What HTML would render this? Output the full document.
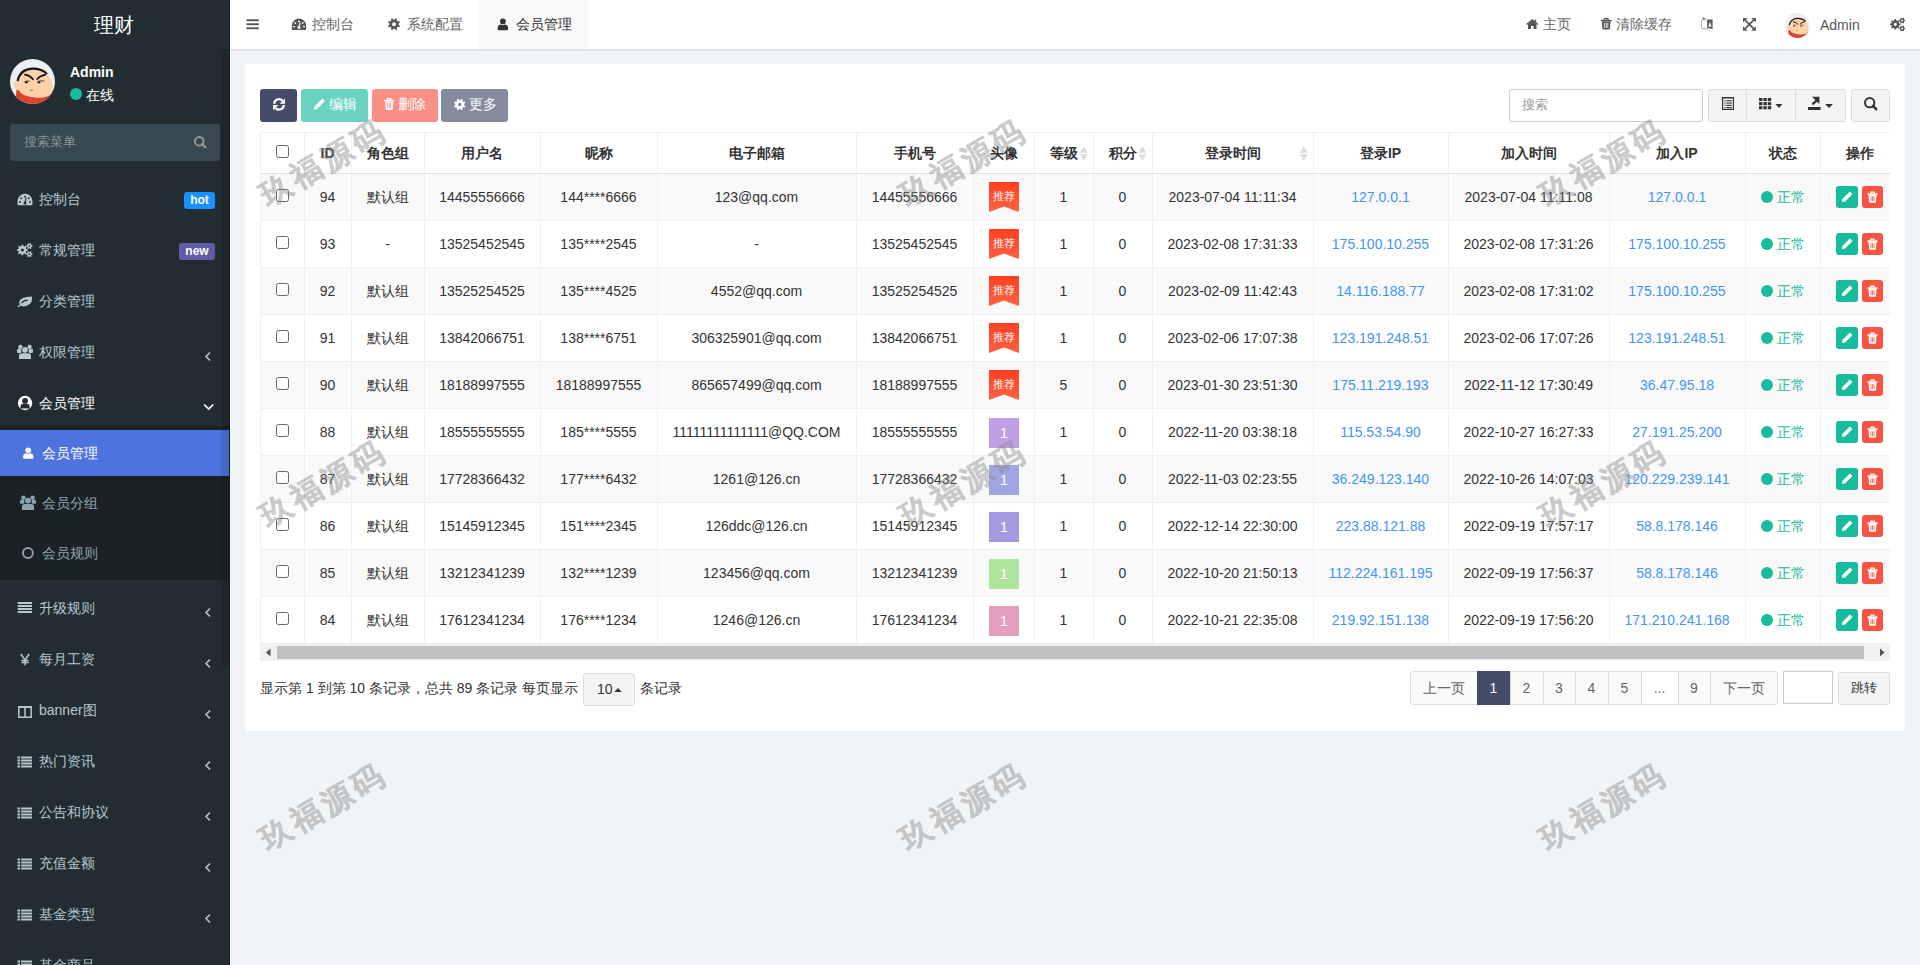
<!DOCTYPE html>
<html><head><meta charset="utf-8"><title>会员管理</title><style>
*{box-sizing:border-box;margin:0;padding:0}
html,body{width:1920px;height:965px;overflow:hidden}
body{position:relative;background:#f1f4f6;font-family:"Liberation Sans",sans-serif;font-size:14px;color:#333;line-height:20px}
.a{position:absolute}
.t{white-space:nowrap}
.badge{height:17px;line-height:17px;font-size:12px;font-weight:bold;color:#fff;border-radius:3px;text-align:center}
.wm{width:200px;height:40px;line-height:40px;text-align:center;font-size:31px;font-weight:bold;letter-spacing:4px;text-indent:4px;color:#8a8a8a;-webkit-text-stroke:0.3px #8a8a8a;opacity:.44;transform:rotate(-30deg);white-space:nowrap}
svg{display:block}
</style></head><body>
<div class="a" style="left:0px;top:0px;width:230px;height:965px;background:#222d32;"></div>
<div class="a t" style="left:94px;top:15px;color:#fff;font-size:20px;line-height:20px;">理财</div>
<div class="a" style="left:10px;top:59px;width:45px;height:45px;border-radius:50%;overflow:hidden"><svg width="45" height="45" viewBox="0 0 45 45"><rect width="45" height="45" fill="#eceef2"/><path d="M6.4 30.3 L5.5 46 L45 46 L45 35 L40 34Z" fill="#d9432f"/><path d="M3.6 25.5 Q3.4 21.6 7.6 21.8 Q10.5 11 22 9.3 Q33 9 38.5 17.2 Q43 22 42.6 30.5 Q41.6 38 33 38.4 Q24 39.4 16.8 37 Q11 35.6 9.4 31.5 Q4.4 31 3.6 25.5Z" fill="#fdd2a8"/><path d="M7.6 22 Q9.8 10.6 22 9.6 Q32 9.4 37 15" stroke="#111" stroke-width="2.2" fill="none"/><path d="M15 15.6 Q19.6 16.2 23 20.2" stroke="#111" stroke-width="1.8" fill="none" stroke-linecap="round"/><path d="M27.2 20 Q30.4 16.4 35 15.8" stroke="#111" stroke-width="1.8" fill="none" stroke-linecap="round"/><path d="M14.5 22.6 Q17 21.6 20 22.2 M27.6 22.4 Q31 21.5 34.2 22" stroke="#222" stroke-width="0.8" fill="none"/><ellipse cx="16.4" cy="23.4" rx="1.5" ry="0.9" fill="#111"/><ellipse cx="29" cy="23.4" rx="1.5" ry="0.9" fill="#111"/><path d="M20 31.5 Q21.5 30.8 23 31.4" stroke="#333" stroke-width="0.6" fill="none"/></svg></div>
<div class="a t" style="left:70px;top:62px;color:#fff;font-size:14px;line-height:20px;font-weight:bold;">Admin</div>
<div class="a t" style="left:86px;top:85px;color:#fff;font-size:14px;line-height:20px;">在线</div>
<div class="a" style="left:10px;top:124px;width:210px;height:37px;background:#374850;border-radius:3px"></div>
<div class="a t" style="left:24px;top:132px;color:#8a9499;font-size:13px;line-height:20px;">搜索菜单</div>
<div class="a t" style="left:39px;top:189px;color:#b8c7ce;font-size:14px;line-height:20px;">控制台</div>
<div class="a badge" style="left:184px;top:192px;width:31px;background:#1890ff">hot</div>
<div class="a t" style="left:39px;top:240px;color:#b8c7ce;font-size:14px;line-height:20px;">常规管理</div>
<div class="a badge" style="left:179px;top:243px;width:36px;background:#605ca8">new</div>
<div class="a t" style="left:39px;top:291px;color:#b8c7ce;font-size:14px;line-height:20px;">分类管理</div>
<div class="a t" style="left:39px;top:342px;color:#b8c7ce;font-size:14px;line-height:20px;">权限管理</div>
<div class="a t" style="left:39px;top:393px;color:#fff;font-size:14px;line-height:20px;">会员管理</div>
<div class="a" style="left:0px;top:426px;width:230px;height:154px;background:#1b2226;"></div>
<div class="a" style="left:0px;top:430px;width:230px;height:46px;background:#4e73df;"></div>
<div class="a t" style="left:42px;top:443px;color:#fff;font-size:14px;line-height:20px;">会员管理</div>
<div class="a t" style="left:42px;top:493px;color:#8aa4af;font-size:14px;line-height:20px;">会员分组</div>
<div class="a t" style="left:42px;top:543px;color:#8aa4af;font-size:14px;line-height:20px;">会员规则</div>
<div class="a t" style="left:39px;top:598px;color:#b8c7ce;font-size:14px;line-height:20px;">升级规则</div>
<div class="a t" style="left:39px;top:649px;color:#b8c7ce;font-size:14px;line-height:20px;">每月工资</div>
<div class="a t" style="left:39px;top:700px;color:#b8c7ce;font-size:14px;line-height:20px;">banner图</div>
<div class="a t" style="left:39px;top:751px;color:#b8c7ce;font-size:14px;line-height:20px;">热门资讯</div>
<div class="a t" style="left:39px;top:802px;color:#b8c7ce;font-size:14px;line-height:20px;">公告和协议</div>
<div class="a t" style="left:39px;top:853px;color:#b8c7ce;font-size:14px;line-height:20px;">充值金额</div>
<div class="a t" style="left:39px;top:904px;color:#b8c7ce;font-size:14px;line-height:20px;">基金类型</div>
<div class="a t" style="left:39px;top:955px;color:#b8c7ce;font-size:14px;line-height:20px;">基金商品</div>
<div class="a" style="left:221px;top:49px;width:8px;height:618px;background:rgba(0,0,0,0.1);border-radius:3px"></div>
<div class="a" style="left:0px;top:49px;width:221px;height:1px;background:rgba(0,0,0,0.06);"></div>
<div class="a" style="left:229px;top:0px;width:1px;height:965px;background:#1a2125;"></div>
<div class="a" style="left:230px;top:0px;width:1690px;height:49px;background:#fff;"></div>
<div class="a" style="left:230px;top:49px;width:1690px;height:1px;background:#dcdfe2;"></div>
<div class="a" style="left:230px;top:50px;width:1690px;height:2px;background:linear-gradient(rgba(0,0,0,0.05),rgba(0,0,0,0));"></div>
<div class="a t" style="left:312px;top:14px;color:#666;font-size:14px;line-height:20px;">控制台</div>
<div class="a t" style="left:407px;top:14px;color:#666;font-size:14px;line-height:20px;">系统配置</div>
<div class="a" style="left:479px;top:0px;width:109px;height:49px;background:#f8f8f8;"></div>
<div class="a t" style="left:516px;top:14px;color:#333;font-size:14px;line-height:20px;">会员管理</div>
<div class="a t" style="left:1543px;top:14px;color:#666;font-size:14px;line-height:20px;">主页</div>
<div class="a t" style="left:1616px;top:14px;color:#666;font-size:14px;line-height:20px;">清除缓存</div>
<div class="a" style="left:1785px;top:13px;width:25px;height:25px;border-radius:50%;overflow:hidden"><svg width="25" height="25" viewBox="0 0 45 45"><rect width="45" height="45" fill="#eceef2"/><path d="M6.4 30.3 L5.5 46 L45 46 L45 35 L40 34Z" fill="#d9432f"/><path d="M3.6 25.5 Q3.4 21.6 7.6 21.8 Q10.5 11 22 9.3 Q33 9 38.5 17.2 Q43 22 42.6 30.5 Q41.6 38 33 38.4 Q24 39.4 16.8 37 Q11 35.6 9.4 31.5 Q4.4 31 3.6 25.5Z" fill="#fdd2a8"/><path d="M7.6 22 Q9.8 10.6 22 9.6 Q32 9.4 37 15" stroke="#111" stroke-width="2.2" fill="none"/><path d="M15 15.6 Q19.6 16.2 23 20.2" stroke="#111" stroke-width="1.8" fill="none" stroke-linecap="round"/><path d="M27.2 20 Q30.4 16.4 35 15.8" stroke="#111" stroke-width="1.8" fill="none" stroke-linecap="round"/><path d="M14.5 22.6 Q17 21.6 20 22.2 M27.6 22.4 Q31 21.5 34.2 22" stroke="#222" stroke-width="0.8" fill="none"/><ellipse cx="16.4" cy="23.4" rx="1.5" ry="0.9" fill="#111"/><ellipse cx="29" cy="23.4" rx="1.5" ry="0.9" fill="#111"/><path d="M20 31.5 Q21.5 30.8 23 31.4" stroke="#333" stroke-width="0.6" fill="none"/></svg></div>
<div class="a t" style="left:1820px;top:15px;color:#555;font-size:14px;line-height:20px;">Admin</div>
<div class="a" style="left:245px;top:64px;width:1660px;height:667px;background:#fff;border-radius:3px"></div>
<div class="a" style="left:260px;top:89px;width:37px;height:33px;background:#444c69;border-radius:3px"></div>
<div class="a" style="left:301px;top:89px;width:67px;height:33px;background:#69d3bf;border-radius:3px"></div>
<div class="a t" style="left:329px;top:94px;color:#fff;font-size:14px;line-height:20px;">编辑</div>
<div class="a" style="left:372px;top:89px;width:66px;height:33px;background:#fa9085;border-radius:3px"></div>
<div class="a t" style="left:398px;top:94px;color:#fff;font-size:14px;line-height:20px;">删除</div>
<div class="a" style="left:441px;top:89px;width:67px;height:33px;background:#858a9d;border-radius:3px"></div>
<div class="a t" style="left:469px;top:94px;color:#fff;font-size:14px;line-height:20px;">更多</div>
<div class="a" style="left:1509px;top:89px;width:194px;height:33px;background:#fff;border:1px solid #ccc;border-radius:3px"></div>
<div class="a t" style="left:1522px;top:95px;color:#999;font-size:13px;line-height:20px;">搜索</div>
<div class="a" style="left:1708px;top:89px;width:138px;height:33px;background:#f4f4f4;border:1px solid #ddd;border-radius:3px"></div>
<div class="a" style="left:1746px;top:89px;width:1px;height:33px;background:#ddd;"></div>
<div class="a" style="left:1795px;top:89px;width:1px;height:33px;background:#ddd;"></div>
<div class="a" style="left:1851px;top:89px;width:39px;height:33px;background:#f4f4f4;border:1px solid #ddd;border-radius:3px"></div>
<div class="a" style="left:260px;top:132px;width:1630px;height:1px;background:#f0f0f0;"></div>
<div class="a" style="left:260px;top:173px;width:1630px;height:1px;background:#e2e2e2;"></div>
<div class="a" style="left:260px;top:174px;width:1630px;height:46px;background:#f9f9f9;"></div>
<div class="a" style="left:260px;top:220px;width:1630px;height:1px;background:#f0f0f0;"></div>
<div class="a" style="left:260px;top:267px;width:1630px;height:1px;background:#f0f0f0;"></div>
<div class="a" style="left:260px;top:268px;width:1630px;height:46px;background:#f9f9f9;"></div>
<div class="a" style="left:260px;top:314px;width:1630px;height:1px;background:#f0f0f0;"></div>
<div class="a" style="left:260px;top:361px;width:1630px;height:1px;background:#f0f0f0;"></div>
<div class="a" style="left:260px;top:362px;width:1630px;height:46px;background:#f9f9f9;"></div>
<div class="a" style="left:260px;top:408px;width:1630px;height:1px;background:#f0f0f0;"></div>
<div class="a" style="left:260px;top:455px;width:1630px;height:1px;background:#f0f0f0;"></div>
<div class="a" style="left:260px;top:456px;width:1630px;height:46px;background:#f9f9f9;"></div>
<div class="a" style="left:260px;top:502px;width:1630px;height:1px;background:#f0f0f0;"></div>
<div class="a" style="left:260px;top:549px;width:1630px;height:1px;background:#f0f0f0;"></div>
<div class="a" style="left:260px;top:550px;width:1630px;height:46px;background:#f9f9f9;"></div>
<div class="a" style="left:260px;top:596px;width:1630px;height:1px;background:#f0f0f0;"></div>
<div class="a" style="left:260px;top:643px;width:1630px;height:1px;background:#f0f0f0;"></div>
<div class="a" style="left:260px;top:132px;width:1px;height:511px;background:#f0f0f0;"></div>
<div class="a" style="left:304px;top:132px;width:1px;height:511px;background:#f0f0f0;"></div>
<div class="a" style="left:351px;top:132px;width:1px;height:511px;background:#f0f0f0;"></div>
<div class="a" style="left:424px;top:132px;width:1px;height:511px;background:#f0f0f0;"></div>
<div class="a" style="left:540px;top:132px;width:1px;height:511px;background:#f0f0f0;"></div>
<div class="a" style="left:657px;top:132px;width:1px;height:511px;background:#f0f0f0;"></div>
<div class="a" style="left:856px;top:132px;width:1px;height:511px;background:#f0f0f0;"></div>
<div class="a" style="left:973px;top:132px;width:1px;height:511px;background:#f0f0f0;"></div>
<div class="a" style="left:1034px;top:132px;width:1px;height:511px;background:#f0f0f0;"></div>
<div class="a" style="left:1093px;top:132px;width:1px;height:511px;background:#f0f0f0;"></div>
<div class="a" style="left:1152px;top:132px;width:1px;height:511px;background:#f0f0f0;"></div>
<div class="a" style="left:1313px;top:132px;width:1px;height:511px;background:#f0f0f0;"></div>
<div class="a" style="left:1448px;top:132px;width:1px;height:511px;background:#f0f0f0;"></div>
<div class="a" style="left:1609px;top:132px;width:1px;height:511px;background:#f0f0f0;"></div>
<div class="a" style="left:1745px;top:132px;width:1px;height:511px;background:#f0f0f0;"></div>
<div class="a" style="left:1820px;top:132px;width:1px;height:511px;background:#f0f0f0;"></div>
<div class="a" style="left:276px;top:145px;width:13px;height:13px;background:#fff;border:1px solid #666;border-radius:2.5px"></div>
<div class="a t" style="left:304px;top:143px;color:#333;font-size:14px;line-height:20px;font-weight:bold;width:47px;text-align:center;">ID</div>
<div class="a t" style="left:351px;top:143px;color:#333;font-size:14px;line-height:20px;font-weight:bold;width:73px;text-align:center;">角色组</div>
<div class="a t" style="left:424px;top:143px;color:#333;font-size:14px;line-height:20px;font-weight:bold;width:116px;text-align:center;">用户名</div>
<div class="a t" style="left:540px;top:143px;color:#333;font-size:14px;line-height:20px;font-weight:bold;width:117px;text-align:center;">昵称</div>
<div class="a t" style="left:657px;top:143px;color:#333;font-size:14px;line-height:20px;font-weight:bold;width:199px;text-align:center;">电子邮箱</div>
<div class="a t" style="left:856px;top:143px;color:#333;font-size:14px;line-height:20px;font-weight:bold;width:117px;text-align:center;">手机号</div>
<div class="a t" style="left:973px;top:143px;color:#333;font-size:14px;line-height:20px;font-weight:bold;width:61px;text-align:center;">头像</div>
<div class="a t" style="left:1034px;top:143px;color:#333;font-size:14px;line-height:20px;font-weight:bold;width:59px;text-align:center;">等级</div>
<div class="a t" style="left:1093px;top:143px;color:#333;font-size:14px;line-height:20px;font-weight:bold;width:59px;text-align:center;">积分</div>
<div class="a t" style="left:1152px;top:143px;color:#333;font-size:14px;line-height:20px;font-weight:bold;width:161px;text-align:center;">登录时间</div>
<div class="a t" style="left:1313px;top:143px;color:#333;font-size:14px;line-height:20px;font-weight:bold;width:135px;text-align:center;">登录IP</div>
<div class="a t" style="left:1448px;top:143px;color:#333;font-size:14px;line-height:20px;font-weight:bold;width:161px;text-align:center;">加入时间</div>
<div class="a t" style="left:1609px;top:143px;color:#333;font-size:14px;line-height:20px;font-weight:bold;width:136px;text-align:center;">加入IP</div>
<div class="a t" style="left:1745px;top:143px;color:#333;font-size:14px;line-height:20px;font-weight:bold;width:75px;text-align:center;">状态</div>
<div class="a t" style="left:1820px;top:143px;color:#333;font-size:14px;line-height:20px;font-weight:bold;width:79px;text-align:center;">操作</div>
<div class="a" style="left:276px;top:189px;width:13px;height:13px;background:#fff;border:1px solid #666;border-radius:2.5px"></div>
<div class="a t" style="left:304px;top:187px;color:#333;font-size:14px;line-height:20px;width:47px;text-align:center;">94</div>
<div class="a t" style="left:351px;top:187px;color:#333;font-size:14px;line-height:20px;width:73px;text-align:center;">默认组</div>
<div class="a t" style="left:424px;top:187px;color:#333;font-size:14px;line-height:20px;width:116px;text-align:center;">14455556666</div>
<div class="a t" style="left:540px;top:187px;color:#333;font-size:14px;line-height:20px;width:117px;text-align:center;">144****6666</div>
<div class="a t" style="left:657px;top:187px;color:#333;font-size:14px;line-height:20px;width:199px;text-align:center;">123@qq.com</div>
<div class="a t" style="left:856px;top:187px;color:#333;font-size:14px;line-height:20px;width:117px;text-align:center;">14455556666</div>
<div class="a" style="left:989px;top:182px;width:30px;height:30px;background:linear-gradient(#ff3f1f,#ff6242);clip-path:polygon(0 0,100% 0,100% 100%,50% 82%,0 100%)"></div>
<div class="a t" style="left:989px;top:188px;color:#fff;font-size:11px;line-height:16px;width:30px;text-align:center;">推荐</div>
<div class="a t" style="left:1034px;top:187px;color:#333;font-size:14px;line-height:20px;width:59px;text-align:center;">1</div>
<div class="a t" style="left:1093px;top:187px;color:#333;font-size:14px;line-height:20px;width:59px;text-align:center;">0</div>
<div class="a t" style="left:1152px;top:187px;color:#333;font-size:14px;line-height:20px;width:161px;text-align:center;">2023-07-04 11:11:34</div>
<div class="a t" style="left:1313px;top:187px;color:#3f95f9;font-size:14px;line-height:20px;width:135px;text-align:center;">127.0.0.1</div>
<div class="a t" style="left:1448px;top:187px;color:#333;font-size:14px;line-height:20px;width:161px;text-align:center;">2023-07-04 11:11:08</div>
<div class="a t" style="left:1609px;top:187px;color:#3f95f9;font-size:14px;line-height:20px;width:136px;text-align:center;">127.0.0.1</div>
<div class="a t" style="left:1777px;top:187px;color:#18bc9c;font-size:14px;line-height:20px;">正常</div>
<div class="a" style="left:1836px;top:186px;width:22px;height:22px;background:#18bc9c;border-radius:3px"></div>
<div class="a" style="left:1862px;top:186px;width:21px;height:22px;background:#f75444;border-radius:3px"></div>
<div class="a" style="left:276px;top:236px;width:13px;height:13px;background:#fff;border:1px solid #666;border-radius:2.5px"></div>
<div class="a t" style="left:304px;top:234px;color:#333;font-size:14px;line-height:20px;width:47px;text-align:center;">93</div>
<div class="a t" style="left:351px;top:234px;color:#333;font-size:14px;line-height:20px;width:73px;text-align:center;">-</div>
<div class="a t" style="left:424px;top:234px;color:#333;font-size:14px;line-height:20px;width:116px;text-align:center;">13525452545</div>
<div class="a t" style="left:540px;top:234px;color:#333;font-size:14px;line-height:20px;width:117px;text-align:center;">135****2545</div>
<div class="a t" style="left:657px;top:234px;color:#333;font-size:14px;line-height:20px;width:199px;text-align:center;">-</div>
<div class="a t" style="left:856px;top:234px;color:#333;font-size:14px;line-height:20px;width:117px;text-align:center;">13525452545</div>
<div class="a" style="left:989px;top:229px;width:30px;height:30px;background:linear-gradient(#ff3f1f,#ff6242);clip-path:polygon(0 0,100% 0,100% 100%,50% 82%,0 100%)"></div>
<div class="a t" style="left:989px;top:235px;color:#fff;font-size:11px;line-height:16px;width:30px;text-align:center;">推荐</div>
<div class="a t" style="left:1034px;top:234px;color:#333;font-size:14px;line-height:20px;width:59px;text-align:center;">1</div>
<div class="a t" style="left:1093px;top:234px;color:#333;font-size:14px;line-height:20px;width:59px;text-align:center;">0</div>
<div class="a t" style="left:1152px;top:234px;color:#333;font-size:14px;line-height:20px;width:161px;text-align:center;">2023-02-08 17:31:33</div>
<div class="a t" style="left:1313px;top:234px;color:#3f95f9;font-size:14px;line-height:20px;width:135px;text-align:center;">175.100.10.255</div>
<div class="a t" style="left:1448px;top:234px;color:#333;font-size:14px;line-height:20px;width:161px;text-align:center;">2023-02-08 17:31:26</div>
<div class="a t" style="left:1609px;top:234px;color:#3f95f9;font-size:14px;line-height:20px;width:136px;text-align:center;">175.100.10.255</div>
<div class="a t" style="left:1777px;top:234px;color:#18bc9c;font-size:14px;line-height:20px;">正常</div>
<div class="a" style="left:1836px;top:233px;width:22px;height:22px;background:#18bc9c;border-radius:3px"></div>
<div class="a" style="left:1862px;top:233px;width:21px;height:22px;background:#f75444;border-radius:3px"></div>
<div class="a" style="left:276px;top:283px;width:13px;height:13px;background:#fff;border:1px solid #666;border-radius:2.5px"></div>
<div class="a t" style="left:304px;top:281px;color:#333;font-size:14px;line-height:20px;width:47px;text-align:center;">92</div>
<div class="a t" style="left:351px;top:281px;color:#333;font-size:14px;line-height:20px;width:73px;text-align:center;">默认组</div>
<div class="a t" style="left:424px;top:281px;color:#333;font-size:14px;line-height:20px;width:116px;text-align:center;">13525254525</div>
<div class="a t" style="left:540px;top:281px;color:#333;font-size:14px;line-height:20px;width:117px;text-align:center;">135****4525</div>
<div class="a t" style="left:657px;top:281px;color:#333;font-size:14px;line-height:20px;width:199px;text-align:center;">4552@qq.com</div>
<div class="a t" style="left:856px;top:281px;color:#333;font-size:14px;line-height:20px;width:117px;text-align:center;">13525254525</div>
<div class="a" style="left:989px;top:276px;width:30px;height:30px;background:linear-gradient(#ff3f1f,#ff6242);clip-path:polygon(0 0,100% 0,100% 100%,50% 82%,0 100%)"></div>
<div class="a t" style="left:989px;top:282px;color:#fff;font-size:11px;line-height:16px;width:30px;text-align:center;">推荐</div>
<div class="a t" style="left:1034px;top:281px;color:#333;font-size:14px;line-height:20px;width:59px;text-align:center;">1</div>
<div class="a t" style="left:1093px;top:281px;color:#333;font-size:14px;line-height:20px;width:59px;text-align:center;">0</div>
<div class="a t" style="left:1152px;top:281px;color:#333;font-size:14px;line-height:20px;width:161px;text-align:center;">2023-02-09 11:42:43</div>
<div class="a t" style="left:1313px;top:281px;color:#3f95f9;font-size:14px;line-height:20px;width:135px;text-align:center;">14.116.188.77</div>
<div class="a t" style="left:1448px;top:281px;color:#333;font-size:14px;line-height:20px;width:161px;text-align:center;">2023-02-08 17:31:02</div>
<div class="a t" style="left:1609px;top:281px;color:#3f95f9;font-size:14px;line-height:20px;width:136px;text-align:center;">175.100.10.255</div>
<div class="a t" style="left:1777px;top:281px;color:#18bc9c;font-size:14px;line-height:20px;">正常</div>
<div class="a" style="left:1836px;top:280px;width:22px;height:22px;background:#18bc9c;border-radius:3px"></div>
<div class="a" style="left:1862px;top:280px;width:21px;height:22px;background:#f75444;border-radius:3px"></div>
<div class="a" style="left:276px;top:330px;width:13px;height:13px;background:#fff;border:1px solid #666;border-radius:2.5px"></div>
<div class="a t" style="left:304px;top:328px;color:#333;font-size:14px;line-height:20px;width:47px;text-align:center;">91</div>
<div class="a t" style="left:351px;top:328px;color:#333;font-size:14px;line-height:20px;width:73px;text-align:center;">默认组</div>
<div class="a t" style="left:424px;top:328px;color:#333;font-size:14px;line-height:20px;width:116px;text-align:center;">13842066751</div>
<div class="a t" style="left:540px;top:328px;color:#333;font-size:14px;line-height:20px;width:117px;text-align:center;">138****6751</div>
<div class="a t" style="left:657px;top:328px;color:#333;font-size:14px;line-height:20px;width:199px;text-align:center;">306325901@qq.com</div>
<div class="a t" style="left:856px;top:328px;color:#333;font-size:14px;line-height:20px;width:117px;text-align:center;">13842066751</div>
<div class="a" style="left:989px;top:323px;width:30px;height:30px;background:linear-gradient(#ff3f1f,#ff6242);clip-path:polygon(0 0,100% 0,100% 100%,50% 82%,0 100%)"></div>
<div class="a t" style="left:989px;top:329px;color:#fff;font-size:11px;line-height:16px;width:30px;text-align:center;">推荐</div>
<div class="a t" style="left:1034px;top:328px;color:#333;font-size:14px;line-height:20px;width:59px;text-align:center;">1</div>
<div class="a t" style="left:1093px;top:328px;color:#333;font-size:14px;line-height:20px;width:59px;text-align:center;">0</div>
<div class="a t" style="left:1152px;top:328px;color:#333;font-size:14px;line-height:20px;width:161px;text-align:center;">2023-02-06 17:07:38</div>
<div class="a t" style="left:1313px;top:328px;color:#3f95f9;font-size:14px;line-height:20px;width:135px;text-align:center;">123.191.248.51</div>
<div class="a t" style="left:1448px;top:328px;color:#333;font-size:14px;line-height:20px;width:161px;text-align:center;">2023-02-06 17:07:26</div>
<div class="a t" style="left:1609px;top:328px;color:#3f95f9;font-size:14px;line-height:20px;width:136px;text-align:center;">123.191.248.51</div>
<div class="a t" style="left:1777px;top:328px;color:#18bc9c;font-size:14px;line-height:20px;">正常</div>
<div class="a" style="left:1836px;top:327px;width:22px;height:22px;background:#18bc9c;border-radius:3px"></div>
<div class="a" style="left:1862px;top:327px;width:21px;height:22px;background:#f75444;border-radius:3px"></div>
<div class="a" style="left:276px;top:377px;width:13px;height:13px;background:#fff;border:1px solid #666;border-radius:2.5px"></div>
<div class="a t" style="left:304px;top:375px;color:#333;font-size:14px;line-height:20px;width:47px;text-align:center;">90</div>
<div class="a t" style="left:351px;top:375px;color:#333;font-size:14px;line-height:20px;width:73px;text-align:center;">默认组</div>
<div class="a t" style="left:424px;top:375px;color:#333;font-size:14px;line-height:20px;width:116px;text-align:center;">18188997555</div>
<div class="a t" style="left:540px;top:375px;color:#333;font-size:14px;line-height:20px;width:117px;text-align:center;">18188997555</div>
<div class="a t" style="left:657px;top:375px;color:#333;font-size:14px;line-height:20px;width:199px;text-align:center;">865657499@qq.com</div>
<div class="a t" style="left:856px;top:375px;color:#333;font-size:14px;line-height:20px;width:117px;text-align:center;">18188997555</div>
<div class="a" style="left:989px;top:370px;width:30px;height:30px;background:linear-gradient(#ff3f1f,#ff6242);clip-path:polygon(0 0,100% 0,100% 100%,50% 82%,0 100%)"></div>
<div class="a t" style="left:989px;top:376px;color:#fff;font-size:11px;line-height:16px;width:30px;text-align:center;">推荐</div>
<div class="a t" style="left:1034px;top:375px;color:#333;font-size:14px;line-height:20px;width:59px;text-align:center;">5</div>
<div class="a t" style="left:1093px;top:375px;color:#333;font-size:14px;line-height:20px;width:59px;text-align:center;">0</div>
<div class="a t" style="left:1152px;top:375px;color:#333;font-size:14px;line-height:20px;width:161px;text-align:center;">2023-01-30 23:51:30</div>
<div class="a t" style="left:1313px;top:375px;color:#3f95f9;font-size:14px;line-height:20px;width:135px;text-align:center;">175.11.219.193</div>
<div class="a t" style="left:1448px;top:375px;color:#333;font-size:14px;line-height:20px;width:161px;text-align:center;">2022-11-12 17:30:49</div>
<div class="a t" style="left:1609px;top:375px;color:#3f95f9;font-size:14px;line-height:20px;width:136px;text-align:center;">36.47.95.18</div>
<div class="a t" style="left:1777px;top:375px;color:#18bc9c;font-size:14px;line-height:20px;">正常</div>
<div class="a" style="left:1836px;top:374px;width:22px;height:22px;background:#18bc9c;border-radius:3px"></div>
<div class="a" style="left:1862px;top:374px;width:21px;height:22px;background:#f75444;border-radius:3px"></div>
<div class="a" style="left:276px;top:424px;width:13px;height:13px;background:#fff;border:1px solid #666;border-radius:2.5px"></div>
<div class="a t" style="left:304px;top:422px;color:#333;font-size:14px;line-height:20px;width:47px;text-align:center;">88</div>
<div class="a t" style="left:351px;top:422px;color:#333;font-size:14px;line-height:20px;width:73px;text-align:center;">默认组</div>
<div class="a t" style="left:424px;top:422px;color:#333;font-size:14px;line-height:20px;width:116px;text-align:center;">18555555555</div>
<div class="a t" style="left:540px;top:422px;color:#333;font-size:14px;line-height:20px;width:117px;text-align:center;">185****5555</div>
<div class="a t" style="left:657px;top:422px;color:#333;font-size:14px;line-height:20px;width:199px;text-align:center;">11111111111111@QQ.COM</div>
<div class="a t" style="left:856px;top:422px;color:#333;font-size:14px;line-height:20px;width:117px;text-align:center;">18555555555</div>
<div class="a" style="left:989px;top:418px;width:30px;height:30px;background:#bf9fe3;"></div>
<div class="a t" style="left:989px;top:423px;color:#fff;font-size:15px;line-height:20px;width:30px;text-align:center;">1</div>
<div class="a t" style="left:1034px;top:422px;color:#333;font-size:14px;line-height:20px;width:59px;text-align:center;">1</div>
<div class="a t" style="left:1093px;top:422px;color:#333;font-size:14px;line-height:20px;width:59px;text-align:center;">0</div>
<div class="a t" style="left:1152px;top:422px;color:#333;font-size:14px;line-height:20px;width:161px;text-align:center;">2022-11-20 03:38:18</div>
<div class="a t" style="left:1313px;top:422px;color:#3f95f9;font-size:14px;line-height:20px;width:135px;text-align:center;">115.53.54.90</div>
<div class="a t" style="left:1448px;top:422px;color:#333;font-size:14px;line-height:20px;width:161px;text-align:center;">2022-10-27 16:27:33</div>
<div class="a t" style="left:1609px;top:422px;color:#3f95f9;font-size:14px;line-height:20px;width:136px;text-align:center;">27.191.25.200</div>
<div class="a t" style="left:1777px;top:422px;color:#18bc9c;font-size:14px;line-height:20px;">正常</div>
<div class="a" style="left:1836px;top:421px;width:22px;height:22px;background:#18bc9c;border-radius:3px"></div>
<div class="a" style="left:1862px;top:421px;width:21px;height:22px;background:#f75444;border-radius:3px"></div>
<div class="a" style="left:276px;top:471px;width:13px;height:13px;background:#fff;border:1px solid #666;border-radius:2.5px"></div>
<div class="a t" style="left:304px;top:469px;color:#333;font-size:14px;line-height:20px;width:47px;text-align:center;">87</div>
<div class="a t" style="left:351px;top:469px;color:#333;font-size:14px;line-height:20px;width:73px;text-align:center;">默认组</div>
<div class="a t" style="left:424px;top:469px;color:#333;font-size:14px;line-height:20px;width:116px;text-align:center;">17728366432</div>
<div class="a t" style="left:540px;top:469px;color:#333;font-size:14px;line-height:20px;width:117px;text-align:center;">177****6432</div>
<div class="a t" style="left:657px;top:469px;color:#333;font-size:14px;line-height:20px;width:199px;text-align:center;">1261@126.cn</div>
<div class="a t" style="left:856px;top:469px;color:#333;font-size:14px;line-height:20px;width:117px;text-align:center;">17728366432</div>
<div class="a" style="left:989px;top:465px;width:30px;height:30px;background:#a0a6e4;"></div>
<div class="a t" style="left:989px;top:470px;color:#fff;font-size:15px;line-height:20px;width:30px;text-align:center;">1</div>
<div class="a t" style="left:1034px;top:469px;color:#333;font-size:14px;line-height:20px;width:59px;text-align:center;">1</div>
<div class="a t" style="left:1093px;top:469px;color:#333;font-size:14px;line-height:20px;width:59px;text-align:center;">0</div>
<div class="a t" style="left:1152px;top:469px;color:#333;font-size:14px;line-height:20px;width:161px;text-align:center;">2022-11-03 02:23:55</div>
<div class="a t" style="left:1313px;top:469px;color:#3f95f9;font-size:14px;line-height:20px;width:135px;text-align:center;">36.249.123.140</div>
<div class="a t" style="left:1448px;top:469px;color:#333;font-size:14px;line-height:20px;width:161px;text-align:center;">2022-10-26 14:07:03</div>
<div class="a t" style="left:1609px;top:469px;color:#3f95f9;font-size:14px;line-height:20px;width:136px;text-align:center;">120.229.239.141</div>
<div class="a t" style="left:1777px;top:469px;color:#18bc9c;font-size:14px;line-height:20px;">正常</div>
<div class="a" style="left:1836px;top:468px;width:22px;height:22px;background:#18bc9c;border-radius:3px"></div>
<div class="a" style="left:1862px;top:468px;width:21px;height:22px;background:#f75444;border-radius:3px"></div>
<div class="a" style="left:276px;top:518px;width:13px;height:13px;background:#fff;border:1px solid #666;border-radius:2.5px"></div>
<div class="a t" style="left:304px;top:516px;color:#333;font-size:14px;line-height:20px;width:47px;text-align:center;">86</div>
<div class="a t" style="left:351px;top:516px;color:#333;font-size:14px;line-height:20px;width:73px;text-align:center;">默认组</div>
<div class="a t" style="left:424px;top:516px;color:#333;font-size:14px;line-height:20px;width:116px;text-align:center;">15145912345</div>
<div class="a t" style="left:540px;top:516px;color:#333;font-size:14px;line-height:20px;width:117px;text-align:center;">151****2345</div>
<div class="a t" style="left:657px;top:516px;color:#333;font-size:14px;line-height:20px;width:199px;text-align:center;">126ddc@126.cn</div>
<div class="a t" style="left:856px;top:516px;color:#333;font-size:14px;line-height:20px;width:117px;text-align:center;">15145912345</div>
<div class="a" style="left:989px;top:512px;width:30px;height:30px;background:#a39ae2;"></div>
<div class="a t" style="left:989px;top:517px;color:#fff;font-size:15px;line-height:20px;width:30px;text-align:center;">1</div>
<div class="a t" style="left:1034px;top:516px;color:#333;font-size:14px;line-height:20px;width:59px;text-align:center;">1</div>
<div class="a t" style="left:1093px;top:516px;color:#333;font-size:14px;line-height:20px;width:59px;text-align:center;">0</div>
<div class="a t" style="left:1152px;top:516px;color:#333;font-size:14px;line-height:20px;width:161px;text-align:center;">2022-12-14 22:30:00</div>
<div class="a t" style="left:1313px;top:516px;color:#3f95f9;font-size:14px;line-height:20px;width:135px;text-align:center;">223.88.121.88</div>
<div class="a t" style="left:1448px;top:516px;color:#333;font-size:14px;line-height:20px;width:161px;text-align:center;">2022-09-19 17:57:17</div>
<div class="a t" style="left:1609px;top:516px;color:#3f95f9;font-size:14px;line-height:20px;width:136px;text-align:center;">58.8.178.146</div>
<div class="a t" style="left:1777px;top:516px;color:#18bc9c;font-size:14px;line-height:20px;">正常</div>
<div class="a" style="left:1836px;top:515px;width:22px;height:22px;background:#18bc9c;border-radius:3px"></div>
<div class="a" style="left:1862px;top:515px;width:21px;height:22px;background:#f75444;border-radius:3px"></div>
<div class="a" style="left:276px;top:565px;width:13px;height:13px;background:#fff;border:1px solid #666;border-radius:2.5px"></div>
<div class="a t" style="left:304px;top:563px;color:#333;font-size:14px;line-height:20px;width:47px;text-align:center;">85</div>
<div class="a t" style="left:351px;top:563px;color:#333;font-size:14px;line-height:20px;width:73px;text-align:center;">默认组</div>
<div class="a t" style="left:424px;top:563px;color:#333;font-size:14px;line-height:20px;width:116px;text-align:center;">13212341239</div>
<div class="a t" style="left:540px;top:563px;color:#333;font-size:14px;line-height:20px;width:117px;text-align:center;">132****1239</div>
<div class="a t" style="left:657px;top:563px;color:#333;font-size:14px;line-height:20px;width:199px;text-align:center;">123456@qq.com</div>
<div class="a t" style="left:856px;top:563px;color:#333;font-size:14px;line-height:20px;width:117px;text-align:center;">13212341239</div>
<div class="a" style="left:989px;top:559px;width:30px;height:30px;background:#b0e49c;"></div>
<div class="a t" style="left:989px;top:564px;color:#fff;font-size:15px;line-height:20px;width:30px;text-align:center;">1</div>
<div class="a t" style="left:1034px;top:563px;color:#333;font-size:14px;line-height:20px;width:59px;text-align:center;">1</div>
<div class="a t" style="left:1093px;top:563px;color:#333;font-size:14px;line-height:20px;width:59px;text-align:center;">0</div>
<div class="a t" style="left:1152px;top:563px;color:#333;font-size:14px;line-height:20px;width:161px;text-align:center;">2022-10-20 21:50:13</div>
<div class="a t" style="left:1313px;top:563px;color:#3f95f9;font-size:14px;line-height:20px;width:135px;text-align:center;">112.224.161.195</div>
<div class="a t" style="left:1448px;top:563px;color:#333;font-size:14px;line-height:20px;width:161px;text-align:center;">2022-09-19 17:56:37</div>
<div class="a t" style="left:1609px;top:563px;color:#3f95f9;font-size:14px;line-height:20px;width:136px;text-align:center;">58.8.178.146</div>
<div class="a t" style="left:1777px;top:563px;color:#18bc9c;font-size:14px;line-height:20px;">正常</div>
<div class="a" style="left:1836px;top:562px;width:22px;height:22px;background:#18bc9c;border-radius:3px"></div>
<div class="a" style="left:1862px;top:562px;width:21px;height:22px;background:#f75444;border-radius:3px"></div>
<div class="a" style="left:276px;top:612px;width:13px;height:13px;background:#fff;border:1px solid #666;border-radius:2.5px"></div>
<div class="a t" style="left:304px;top:610px;color:#333;font-size:14px;line-height:20px;width:47px;text-align:center;">84</div>
<div class="a t" style="left:351px;top:610px;color:#333;font-size:14px;line-height:20px;width:73px;text-align:center;">默认组</div>
<div class="a t" style="left:424px;top:610px;color:#333;font-size:14px;line-height:20px;width:116px;text-align:center;">17612341234</div>
<div class="a t" style="left:540px;top:610px;color:#333;font-size:14px;line-height:20px;width:117px;text-align:center;">176****1234</div>
<div class="a t" style="left:657px;top:610px;color:#333;font-size:14px;line-height:20px;width:199px;text-align:center;">1246@126.cn</div>
<div class="a t" style="left:856px;top:610px;color:#333;font-size:14px;line-height:20px;width:117px;text-align:center;">17612341234</div>
<div class="a" style="left:989px;top:606px;width:30px;height:30px;background:#e49ebe;"></div>
<div class="a t" style="left:989px;top:611px;color:#fff;font-size:15px;line-height:20px;width:30px;text-align:center;">1</div>
<div class="a t" style="left:1034px;top:610px;color:#333;font-size:14px;line-height:20px;width:59px;text-align:center;">1</div>
<div class="a t" style="left:1093px;top:610px;color:#333;font-size:14px;line-height:20px;width:59px;text-align:center;">0</div>
<div class="a t" style="left:1152px;top:610px;color:#333;font-size:14px;line-height:20px;width:161px;text-align:center;">2022-10-21 22:35:08</div>
<div class="a t" style="left:1313px;top:610px;color:#3f95f9;font-size:14px;line-height:20px;width:135px;text-align:center;">219.92.151.138</div>
<div class="a t" style="left:1448px;top:610px;color:#333;font-size:14px;line-height:20px;width:161px;text-align:center;">2022-09-19 17:56:20</div>
<div class="a t" style="left:1609px;top:610px;color:#3f95f9;font-size:14px;line-height:20px;width:136px;text-align:center;">171.210.241.168</div>
<div class="a t" style="left:1777px;top:610px;color:#18bc9c;font-size:14px;line-height:20px;">正常</div>
<div class="a" style="left:1836px;top:609px;width:22px;height:22px;background:#18bc9c;border-radius:3px"></div>
<div class="a" style="left:1862px;top:609px;width:21px;height:22px;background:#f75444;border-radius:3px"></div>
<div class="a" style="left:260px;top:643px;width:1630px;height:18px;background:#f1f1f1;"></div>
<div class="a" style="left:277px;top:646px;width:1587px;height:13px;background:#c1c1c1;"></div>
<div class="a t" style="left:260px;top:678px;color:#333;font-size:14px;line-height:20px;">显示第 1 到第 10 条记录，总共 89 条记录 每页显示</div>
<div class="a" style="left:583px;top:673px;width:52px;height:33px;background:#f4f4f4;border:1px solid #ddd;border-radius:3px"></div>
<div class="a t" style="left:597px;top:679px;color:#333;font-size:14px;line-height:20px;">10</div>
<div class="a t" style="left:640px;top:678px;color:#333;font-size:14px;line-height:20px;">条记录</div>
<div class="a" style="left:1410px;top:671px;width:368px;height:34px;background:#fafafa;border:1px solid #ddd;border-radius:3px"></div>
<div class="a" style="left:1641px;top:672px;width:37px;height:32px;background:#fff;"></div>
<div class="a" style="left:1477px;top:671px;width:1px;height:34px;background:#ddd;"></div>
<div class="a" style="left:1510px;top:671px;width:1px;height:34px;background:#ddd;"></div>
<div class="a" style="left:1543px;top:671px;width:1px;height:34px;background:#ddd;"></div>
<div class="a" style="left:1575px;top:671px;width:1px;height:34px;background:#ddd;"></div>
<div class="a" style="left:1608px;top:671px;width:1px;height:34px;background:#ddd;"></div>
<div class="a" style="left:1641px;top:671px;width:1px;height:34px;background:#ddd;"></div>
<div class="a" style="left:1678px;top:671px;width:1px;height:34px;background:#ddd;"></div>
<div class="a" style="left:1710px;top:671px;width:1px;height:34px;background:#ddd;"></div>
<div class="a" style="left:1477px;top:671px;width:33px;height:34px;background:#444c69;"></div>
<div class="a t" style="left:1410px;top:678px;color:#666;font-size:14px;line-height:20px;width:67px;text-align:center;">上一页</div>
<div class="a t" style="left:1477px;top:678px;color:#fff;font-size:14px;line-height:20px;width:33px;text-align:center;">1</div>
<div class="a t" style="left:1510px;top:678px;color:#666;font-size:14px;line-height:20px;width:33px;text-align:center;">2</div>
<div class="a t" style="left:1543px;top:678px;color:#666;font-size:14px;line-height:20px;width:32px;text-align:center;">3</div>
<div class="a t" style="left:1575px;top:678px;color:#666;font-size:14px;line-height:20px;width:33px;text-align:center;">4</div>
<div class="a t" style="left:1608px;top:678px;color:#666;font-size:14px;line-height:20px;width:33px;text-align:center;">5</div>
<div class="a t" style="left:1641px;top:678px;color:#666;font-size:14px;line-height:20px;width:37px;text-align:center;">...</div>
<div class="a t" style="left:1678px;top:678px;color:#666;font-size:14px;line-height:20px;width:32px;text-align:center;">9</div>
<div class="a t" style="left:1710px;top:678px;color:#666;font-size:14px;line-height:20px;width:68px;text-align:center;">下一页</div>
<div class="a" style="left:1783px;top:671px;width:50px;height:33px;background:#fff;border:1px solid #ccc"></div>
<div class="a" style="left:1838px;top:672px;width:52px;height:33px;background:#f4f4f4;border:1px solid #ddd;border-radius:3px"></div>
<div class="a t" style="left:1838px;top:678px;color:#333;font-size:13px;line-height:20px;width:52px;text-align:center;">跳转</div>
<svg class="a" style="left:0;top:0" width="1920" height="965" viewBox="0 0 1920 965">
<circle cx="76" cy="94" r="6" fill="#18bc9c"/>
<circle cx="199.28" cy="141.28" r="4.32" stroke="#999" stroke-width="1.92" fill="none"/>
<path d="M202.30 144.30 L205.20 147.20" stroke="#999" stroke-width="2.40" stroke-linecap="round"/>
<path fill="#b8c7ce" d="M17.50 201.20 A7.50 7.50 0 0 1 32.50 201.20 L32.30 205.20 L17.70 205.20Z"/>
<circle cx="25.00" cy="196.80" r="0.95" fill="#222d32"/>
<circle cx="21.30" cy="198.30" r="0.95" fill="#222d32"/>
<circle cx="28.70" cy="198.30" r="0.95" fill="#222d32"/>
<circle cx="20.00" cy="202.00" r="0.95" fill="#222d32"/>
<circle cx="30.00" cy="202.00" r="0.95" fill="#222d32"/>
<path d="M25.00 202.80 L26.10 198.00" stroke="#222d32" stroke-width="1.2"/>
<circle cx="25.00" cy="203.00" r="1.5" fill="#222d32"/>
<path fill-rule="evenodd" fill="#b8c7ce" d="M26.38 249.01 L27.75 249.24 L27.75 250.76 L26.38 250.99 L25.91 252.11 L26.72 253.24 L25.64 254.32 L24.51 253.51 L23.39 253.98 L23.16 255.35 L21.64 255.35 L21.41 253.98 L20.29 253.51 L19.16 254.32 L18.08 253.24 L18.89 252.11 L18.42 250.99 L17.05 250.76 L17.05 249.24 L18.42 249.01 L18.89 247.89 L18.08 246.76 L19.16 245.68 L20.29 246.49 L21.41 246.02 L21.64 244.65 L23.16 244.65 L23.39 246.02 L24.51 246.49 L25.64 245.68 L26.72 246.76 L25.91 247.89ZM20.80 250.00a1.6 1.6 0 1 0 3.20 0a1.6 1.6 0 1 0 -3.20 0Z"/>
<path fill-rule="evenodd" fill="#b8c7ce" d="M31.58 245.37 L32.45 245.52 L32.45 246.68 L31.58 246.83 L31.13 247.62 L31.43 248.45 L30.42 249.03 L29.85 248.35 L28.95 248.35 L28.38 249.03 L27.37 248.45 L27.67 247.62 L27.22 246.83 L26.35 246.68 L26.35 245.52 L27.22 245.37 L27.67 244.58 L27.37 243.75 L28.38 243.17 L28.95 243.85 L29.85 243.85 L30.42 243.17 L31.43 243.75 L31.13 244.58ZM28.50 246.10a0.9 0.9 0 1 0 1.80 0a0.9 0.9 0 1 0 -1.80 0Z"/>
<path fill-rule="evenodd" fill="#b8c7ce" d="M31.58 253.47 L32.45 253.62 L32.45 254.78 L31.58 254.93 L31.13 255.72 L31.43 256.55 L30.42 257.13 L29.85 256.45 L28.95 256.45 L28.38 257.13 L27.37 256.55 L27.67 255.72 L27.22 254.93 L26.35 254.78 L26.35 253.62 L27.22 253.47 L27.67 252.68 L27.37 251.85 L28.38 251.27 L28.95 251.95 L29.85 251.95 L30.42 251.27 L31.43 251.85 L31.13 252.68ZM28.50 254.20a0.9 0.9 0 1 0 1.80 0a0.9 0.9 0 1 0 -1.80 0Z"/>
<path fill="#b8c7ce" d="M31.90 296.50 Q32.90 302.50 28.40 305.10 Q23.90 307.50 20.60 305.50 L18.60 307.30 L17.40 306.50 L19.60 304.70 Q18.00 300.50 22.90 298.10 Q26.40 296.80 31.90 296.50Z"/>
<path d="M21.40 303.10 Q23.90 300.10 27.60 300.10" stroke="#222d32" stroke-width="1.1" fill="none"/>
<circle cx="20.40" cy="346.90" r="2.20" fill="#b8c7ce"/>
<circle cx="29.60" cy="346.90" r="2.20" fill="#b8c7ce"/>
<rect x="17.00" y="348.90" width="4.30" height="4.00" rx="1.00" fill="#b8c7ce"/>
<rect x="28.70" y="348.90" width="4.30" height="4.00" rx="1.00" fill="#b8c7ce"/>
<circle cx="25.00" cy="349.80" r="2.90" fill="#b8c7ce"/>
<path fill="#b8c7ce" d="M19.00 359.10 L19.00 355.70 Q19.00 353.30 21.60 353.30 L28.40 353.30 Q31.00 353.30 31.00 355.70 L31.00 359.10Z"/>
<path d="M210 352.5 L206 356.5 L210 360.5" stroke="#b8c7ce" stroke-width="1.6" fill="none"/>
<circle cx="25.05" cy="403" r="7.2" fill="#fff"/>
<circle cx="25.05" cy="400.90" r="2.9" fill="#222d32"/>
<path fill="#222d32" d="M20.55 408.40 L20.55 406.00 Q20.55 404.00 22.55 404.00 L27.55 404.00 Q29.55 404.00 29.55 406.00 L29.55 408.40Z"/>
<path d="M204.2 404.5 L208.7 409.0 L213.2 404.5" stroke="#fff" stroke-width="1.7" fill="none"/>
<circle cx="28.25" cy="450.33" r="2.83" fill="#fff"/>
<path fill="#fff" d="M23.00 457.60 Q23.00 453.62 25.94 453.28 Q28.25 454.66 30.56 453.28 Q33.50 453.62 33.50 457.60 Q33.50 458.80 32.00 458.80 L24.50 458.80 Q23.00 458.80 23.00 457.60Z"/>
<circle cx="23.40" cy="497.70" r="2.20" fill="#8aa4af"/>
<circle cx="32.60" cy="497.70" r="2.20" fill="#8aa4af"/>
<rect x="20.00" y="499.70" width="4.30" height="4.00" rx="1.00" fill="#8aa4af"/>
<rect x="31.70" y="499.70" width="4.30" height="4.00" rx="1.00" fill="#8aa4af"/>
<circle cx="28.00" cy="500.60" r="2.90" fill="#8aa4af"/>
<path fill="#8aa4af" d="M22.00 509.90 L22.00 506.50 Q22.00 504.10 24.60 504.10 L31.40 504.10 Q34.00 504.10 34.00 506.50 L34.00 509.90Z"/>
<circle cx="27.9" cy="553" r="4.95" stroke="#8aa4af" stroke-width="1.9" fill="none"/>
<rect x="17.7" y="602" width="14.3" height="2" fill="#b8c7ce"/>
<rect x="17.7" y="605" width="14.3" height="2" fill="#b8c7ce"/>
<rect x="17.7" y="608" width="14.3" height="2" fill="#b8c7ce"/>
<rect x="17.7" y="611" width="14.3" height="2" fill="#b8c7ce"/>
<path d="M210 608.5 L206 612.5 L210 616.5" stroke="#b8c7ce" stroke-width="1.6" fill="none"/>
<path d="M20.8 654 L25 660 L29.2 654 M25 660 L25 665.2 M21.4 660.4 L28.6 660.4 M21.4 662.6 L28.6 662.6" stroke="#b8c7ce" stroke-width="1.5" fill="none"/>
<path d="M210 659.5 L206 663.5 L210 667.5" stroke="#b8c7ce" stroke-width="1.6" fill="none"/>
<path fill-rule="evenodd" fill="#b8c7ce" d="M18 706h14v12h-14Z M19.5 708v8.5h4.75v-8.5Z M30.5 708v8.5h-4.75v-8.5Z"/>
<path d="M210 710.5 L206 714.5 L210 718.5" stroke="#b8c7ce" stroke-width="1.6" fill="none"/>
<rect x="17.5" y="756.5" width="2.6" height="2" fill="#b8c7ce"/>
<rect x="21.1" y="756.5" width="10.9" height="2" fill="#b8c7ce"/>
<rect x="17.5" y="759.5" width="2.6" height="2" fill="#b8c7ce"/>
<rect x="21.1" y="759.5" width="10.9" height="2" fill="#b8c7ce"/>
<rect x="17.5" y="762.5" width="2.6" height="2" fill="#b8c7ce"/>
<rect x="21.1" y="762.5" width="10.9" height="2" fill="#b8c7ce"/>
<rect x="17.5" y="765.5" width="2.6" height="2" fill="#b8c7ce"/>
<rect x="21.1" y="765.5" width="10.9" height="2" fill="#b8c7ce"/>
<path d="M210 761.5 L206 765.5 L210 769.5" stroke="#b8c7ce" stroke-width="1.6" fill="none"/>
<rect x="17.5" y="807.5" width="2.6" height="2" fill="#b8c7ce"/>
<rect x="21.1" y="807.5" width="10.9" height="2" fill="#b8c7ce"/>
<rect x="17.5" y="810.5" width="2.6" height="2" fill="#b8c7ce"/>
<rect x="21.1" y="810.5" width="10.9" height="2" fill="#b8c7ce"/>
<rect x="17.5" y="813.5" width="2.6" height="2" fill="#b8c7ce"/>
<rect x="21.1" y="813.5" width="10.9" height="2" fill="#b8c7ce"/>
<rect x="17.5" y="816.5" width="2.6" height="2" fill="#b8c7ce"/>
<rect x="21.1" y="816.5" width="10.9" height="2" fill="#b8c7ce"/>
<path d="M210 812.5 L206 816.5 L210 820.5" stroke="#b8c7ce" stroke-width="1.6" fill="none"/>
<rect x="17.5" y="858.5" width="2.6" height="2" fill="#b8c7ce"/>
<rect x="21.1" y="858.5" width="10.9" height="2" fill="#b8c7ce"/>
<rect x="17.5" y="861.5" width="2.6" height="2" fill="#b8c7ce"/>
<rect x="21.1" y="861.5" width="10.9" height="2" fill="#b8c7ce"/>
<rect x="17.5" y="864.5" width="2.6" height="2" fill="#b8c7ce"/>
<rect x="21.1" y="864.5" width="10.9" height="2" fill="#b8c7ce"/>
<rect x="17.5" y="867.5" width="2.6" height="2" fill="#b8c7ce"/>
<rect x="21.1" y="867.5" width="10.9" height="2" fill="#b8c7ce"/>
<path d="M210 863.5 L206 867.5 L210 871.5" stroke="#b8c7ce" stroke-width="1.6" fill="none"/>
<rect x="17.5" y="909.5" width="2.6" height="2" fill="#b8c7ce"/>
<rect x="21.1" y="909.5" width="10.9" height="2" fill="#b8c7ce"/>
<rect x="17.5" y="912.5" width="2.6" height="2" fill="#b8c7ce"/>
<rect x="21.1" y="912.5" width="10.9" height="2" fill="#b8c7ce"/>
<rect x="17.5" y="915.5" width="2.6" height="2" fill="#b8c7ce"/>
<rect x="21.1" y="915.5" width="10.9" height="2" fill="#b8c7ce"/>
<rect x="17.5" y="918.5" width="2.6" height="2" fill="#b8c7ce"/>
<rect x="21.1" y="918.5" width="10.9" height="2" fill="#b8c7ce"/>
<path d="M210 914.5 L206 918.5 L210 922.5" stroke="#b8c7ce" stroke-width="1.6" fill="none"/>
<rect x="17.5" y="960.5" width="2.6" height="2" fill="#b8c7ce"/>
<rect x="21.1" y="960.5" width="10.9" height="2" fill="#b8c7ce"/>
<rect x="17.5" y="963.5" width="2.6" height="2" fill="#b8c7ce"/>
<rect x="21.1" y="963.5" width="10.9" height="2" fill="#b8c7ce"/>
<rect x="17.5" y="966.5" width="2.6" height="2" fill="#b8c7ce"/>
<rect x="21.1" y="966.5" width="10.9" height="2" fill="#b8c7ce"/>
<rect x="17.5" y="969.5" width="2.6" height="2" fill="#b8c7ce"/>
<rect x="21.1" y="969.5" width="10.9" height="2" fill="#b8c7ce"/>
<path d="M210 965.5 L206 969.5 L210 973.5" stroke="#b8c7ce" stroke-width="1.6" fill="none"/>
<rect x="246.5" y="19.3" width="12.3" height="1.9" fill="#555"/>
<rect x="246.5" y="23.3" width="12.3" height="1.9" fill="#555"/>
<rect x="246.5" y="27.3" width="12.3" height="1.9" fill="#555"/>
<path fill="#555" d="M291.80 25.80 A7.20 7.20 0 0 1 306.20 25.80 L306.00 30.00 L292.00 30.00Z"/>
<circle cx="299.00" cy="21.40" r="0.95" fill="#fff"/>
<circle cx="295.30" cy="22.90" r="0.95" fill="#fff"/>
<circle cx="302.70" cy="22.90" r="0.95" fill="#fff"/>
<circle cx="294.00" cy="26.60" r="0.95" fill="#fff"/>
<circle cx="304.00" cy="26.60" r="0.95" fill="#fff"/>
<path d="M299.00 27.40 L300.10 22.60" stroke="#fff" stroke-width="1.2"/>
<circle cx="299.00" cy="27.60" r="1.5" fill="#fff"/>
<path fill-rule="evenodd" fill="#555" d="M398.46 24.87 L399.91 25.72 L399.25 27.31 L397.63 26.88 L396.68 27.83 L397.11 29.45 L395.52 30.11 L394.67 28.66 L393.33 28.66 L392.48 30.11 L390.89 29.45 L391.32 27.83 L390.37 26.88 L388.75 27.31 L388.09 25.72 L389.54 24.87 L389.54 23.53 L388.09 22.68 L388.75 21.09 L390.37 21.52 L391.32 20.57 L390.89 18.95 L392.48 18.29 L393.33 19.74 L394.67 19.74 L395.52 18.29 L397.11 18.95 L396.68 20.57 L397.63 21.52 L399.25 21.09 L399.91 22.68 L398.46 23.53ZM392.05 24.20a1.952 1.952 0 1 0 3.90 0a1.952 1.952 0 1 0 -3.90 0Z"/>
<circle cx="502.90" cy="21.46" r="2.86" fill="#333"/>
<path fill="#333" d="M497.60 29.00 Q497.60 24.89 500.57 24.54 Q502.90 25.95 505.23 24.54 Q508.20 24.89 508.20 29.00 Q508.20 30.20 506.70 30.20 L499.10 30.20 Q497.60 30.20 497.60 29.00Z"/>
<path fill="#555" d="M1528 24.2 L1532.25 20.6 L1536.5 24.2 L1536.5 29 L1533.5 29 L1533.5 26 L1531 26 L1531 29 L1528 29Z"/>
<path d="M1526.6 24.6 L1532.25 19.9 L1537.9 24.6" stroke="#555" stroke-width="1.3" fill="none"/>
<rect x="1534.6" y="19.6" width="1.6" height="3" fill="#555"/>
<rect x="1600.8" y="19.8" width="10.8" height="1.6" fill="#555"/>
<path d="M1604.36 20 L1604.36 18.6 L1608.04 18.6 L1608.04 20" stroke="#555" stroke-width="1.1" fill="none"/>
<path fill="#555" d="M1601.88 21.4 L1610.52 21.4 L1609.98 28.8 Q1609.87 29.6 1608.58 29.6 L1603.82 29.6 Q1602.53 29.6 1602.42 28.8Z"/>
<rect x="1604.18" y="22.8" width="0.8" height="5.20" fill="#fff"/>
<rect x="1605.80" y="22.8" width="0.8" height="5.20" fill="#fff"/>
<rect x="1607.42" y="22.8" width="0.8" height="5.20" fill="#fff"/>
<path fill="none" stroke="#bbb" stroke-width="1" d="M1701.5 20 L1707.5 20 L1707.5 28.5 L1701.5 28.5Z"/>
<path fill="#555" d="M1702.2 17 L1706 19 L1703 19.4Z"/>
<path fill="#555" d="M1707.3 19.6 L1712.6 19.6 L1712.6 29 L1707.3 28Z"/>
<path fill="#fff" d="M1709.95 21.6 L1711.6 27 L1710.6 27 L1710.25 25.8 L1709.65 25.8 L1709.3 27 L1708.3 27Z"/>
<path fill="none" stroke="#ccc" stroke-width="0.8" d="M1703 30 L1710 30"/>
<path d="M1745.2 20.2 L1753.6 28.6 M1753.6 20.2 L1745.2 28.6" stroke="#555" stroke-width="1.7"/>
<path fill="#555" d="M1743 18 L1747.6 18 L1743 22.6Z"/>
<path fill="#555" d="M1755.8 18 L1751.2 18 L1755.8 22.6Z"/>
<path fill="#555" d="M1743 30.8 L1747.6 30.8 L1743 26.200000000000003Z"/>
<path fill="#555" d="M1755.8 30.8 L1751.2 30.8 L1755.8 26.200000000000003Z"/>
<path fill-rule="evenodd" fill="#555" d="M1899.19 23.39 L1900.53 23.61 L1900.53 25.11 L1899.19 25.33 L1898.73 26.43 L1899.52 27.54 L1898.47 28.59 L1897.36 27.80 L1896.26 28.26 L1896.04 29.60 L1894.55 29.60 L1894.32 28.26 L1893.22 27.80 L1892.11 28.59 L1891.06 27.54 L1891.85 26.43 L1891.39 25.33 L1890.05 25.11 L1890.05 23.61 L1891.39 23.39 L1891.85 22.29 L1891.06 21.18 L1892.11 20.13 L1893.22 20.92 L1894.32 20.46 L1894.55 19.12 L1896.04 19.12 L1896.26 20.46 L1897.36 20.92 L1898.47 20.13 L1899.52 21.18 L1898.73 22.29ZM1893.72 24.36a1.568 1.568 0 1 0 3.14 0a1.568 1.568 0 1 0 -3.14 0Z"/>
<path fill-rule="evenodd" fill="#555" d="M1904.29 19.82 L1905.14 19.97 L1905.14 21.11 L1904.29 21.26 L1903.84 22.03 L1904.14 22.84 L1903.15 23.41 L1902.60 22.75 L1901.71 22.75 L1901.15 23.41 L1900.17 22.84 L1900.46 22.03 L1900.02 21.26 L1899.17 21.11 L1899.17 19.97 L1900.02 19.82 L1900.46 19.05 L1900.17 18.24 L1901.15 17.67 L1901.71 18.33 L1902.60 18.33 L1903.15 17.67 L1904.14 18.24 L1903.84 19.05ZM1901.27 20.54a0.882 0.882 0 1 0 1.76 0a0.882 0.882 0 1 0 -1.76 0Z"/>
<path fill-rule="evenodd" fill="#555" d="M1904.29 27.76 L1905.14 27.91 L1905.14 29.05 L1904.29 29.19 L1903.84 29.97 L1904.14 30.78 L1903.15 31.35 L1902.60 30.69 L1901.71 30.69 L1901.15 31.35 L1900.17 30.78 L1900.46 29.97 L1900.02 29.19 L1899.17 29.05 L1899.17 27.91 L1900.02 27.76 L1900.46 26.99 L1900.17 26.18 L1901.15 25.61 L1901.71 26.27 L1902.60 26.27 L1903.15 25.61 L1904.14 26.18 L1903.84 26.99ZM1901.27 28.48a0.882 0.882 0 1 0 1.76 0a0.882 0.882 0 1 0 -1.76 0Z"/>
<path d="M274.30 103.80 A4.7 4.4 0 0 1 282.49 100.66" stroke="#fff" stroke-width="2.3" fill="none"/>
<path fill="#fff" d="M279.60 103.80 L285.00 103.80 L285.00 98.60Z"/>
<path d="M283.70 105.00 A4.7 4.4 0 0 1 275.51 108.14" stroke="#fff" stroke-width="2.3" fill="none"/>
<path fill="#fff" d="M278.40 105.00 L273.00 105.00 L273.00 110.20Z"/>
<path fill="#fff" d="M322.40 98.50 L325.00 101.10 L317.00 109.10 L314.00 109.50 L314.40 106.50Z"/>
<path d="M315.30 106.10 L317.40 108.20" stroke="#69d3bf" stroke-width="0.7"/>
<rect x="384.2" y="99.8" width="10" height="1.6" fill="#fff"/>
<path d="M387.50 100 L387.50 98.6 L390.90 98.6 L390.90 100" stroke="#fff" stroke-width="1.1" fill="none"/>
<path fill="#fff" d="M385.20 101.4 L393.20 101.4 L392.70 109.2 Q392.60 110 391.40 110 L387.00 110 Q385.80 110 385.70 109.2Z"/>
<rect x="387.30" y="102.8" width="0.8" height="5.60" fill="#fa9085"/>
<rect x="388.80" y="102.8" width="0.8" height="5.60" fill="#fa9085"/>
<rect x="390.30" y="102.8" width="0.8" height="5.60" fill="#fa9085"/>
<path fill-rule="evenodd" fill="#fff" d="M464.02 105.15 L465.41 105.97 L464.78 107.50 L463.21 107.09 L462.29 108.01 L462.70 109.58 L461.17 110.21 L460.35 108.82 L459.05 108.82 L458.23 110.21 L456.70 109.58 L457.11 108.01 L456.19 107.09 L454.62 107.50 L453.99 105.97 L455.38 105.15 L455.38 103.85 L453.99 103.03 L454.62 101.50 L456.19 101.91 L457.11 100.99 L456.70 99.42 L458.23 98.79 L459.05 100.18 L460.35 100.18 L461.17 98.79 L462.70 99.42 L462.29 100.99 L463.21 101.91 L464.78 101.50 L465.41 103.03 L464.02 103.85ZM457.93 104.50a1.77 1.77 0 1 0 3.54 0a1.77 1.77 0 1 0 -3.54 0Z"/>
<rect x="1722.6" y="97.6" width="10.8" height="11.8" stroke="#333" stroke-width="1.2" fill="none"/>
<rect x="1722" y="97" width="12" height="1.4" fill="#333"/>
<rect x="1724.4" y="100.20" width="1.1" height="1.1" fill="#333"/>
<rect x="1726.3" y="100.20" width="5.5" height="1.1" fill="#333"/>
<rect x="1724.4" y="102.50" width="1.1" height="1.1" fill="#333"/>
<rect x="1726.3" y="102.50" width="5.5" height="1.1" fill="#333"/>
<rect x="1724.4" y="104.80" width="1.1" height="1.1" fill="#333"/>
<rect x="1726.3" y="104.80" width="5.5" height="1.1" fill="#333"/>
<rect x="1724.4" y="107.10" width="1.1" height="1.1" fill="#333"/>
<rect x="1726.3" y="107.10" width="5.5" height="1.1" fill="#333"/>
<rect x="1759.00" y="98.00" width="3.4" height="3.1" fill="#333"/>
<rect x="1763.40" y="98.00" width="3.4" height="3.1" fill="#333"/>
<rect x="1767.80" y="98.00" width="3.4" height="3.1" fill="#333"/>
<rect x="1759.00" y="102.10" width="3.4" height="3.1" fill="#333"/>
<rect x="1763.40" y="102.10" width="3.4" height="3.1" fill="#333"/>
<rect x="1767.80" y="102.10" width="3.4" height="3.1" fill="#333"/>
<rect x="1759.00" y="106.20" width="3.4" height="3.1" fill="#333"/>
<rect x="1763.40" y="106.20" width="3.4" height="3.1" fill="#333"/>
<rect x="1767.80" y="106.20" width="3.4" height="3.1" fill="#333"/>
<path fill="#333" d="M1775.5 104 L1782.5 104 L1779.0 108Z"/>
<rect x="1808" y="107" width="12.6" height="3" fill="#333"/>
<path fill="#333" d="M1811.9 96.85 L1819.4 96.85 L1819.4 104Z"/>
<path d="M1816.6 100.6 L1812.4 104.4" stroke="#333" stroke-width="2.3"/>
<path fill="#333" d="M1825 104 L1833 104 L1829.0 108Z"/>
<circle cx="1869.68" cy="102.68" r="4.68" stroke="#333" stroke-width="2.00" fill="none"/>
<path d="M1872.96 105.96 L1876.20 109.20" stroke="#333" stroke-width="2.50" stroke-linecap="round"/>
<path fill="#dcdcdc" d="M1079.7 152.79999999999998 L1087.7 152.79999999999998 L1083.7 146.2Z M1079.7 154.2 L1087.7 154.2 L1083.7 160.79999999999998Z"/>
<path fill="#dcdcdc" d="M1138.3 152.79999999999998 L1146.3 152.79999999999998 L1142.3 146.2Z M1138.3 154.2 L1146.3 154.2 L1142.3 160.79999999999998Z"/>
<path fill="#dcdcdc" d="M1299.7 152.79999999999998 L1307.7 152.79999999999998 L1303.7 146.2Z M1299.7 154.2 L1307.7 154.2 L1303.7 160.79999999999998Z"/>
<circle cx="1767" cy="197" r="6" fill="#18bc9c"/>
<path fill="#fff" d="M1849.90 191.50 L1852.50 194.10 L1845.00 201.60 L1842.00 202.00 L1842.40 199.00Z"/>
<rect x="1867.5" y="193.3" width="10" height="1.6" fill="#fff"/>
<path d="M1870.80 193.5 L1870.80 192.1 L1874.20 192.1 L1874.20 193.5" stroke="#fff" stroke-width="1.1" fill="none"/>
<path fill="#fff" d="M1868.50 194.9 L1876.50 194.9 L1876.00 201.89999999999998 Q1875.90 202.7 1874.70 202.7 L1870.30 202.7 Q1869.10 202.7 1869.00 201.89999999999998Z"/>
<rect x="1870.60" y="196.3" width="0.8" height="4.80" fill="#f75444"/>
<rect x="1872.10" y="196.3" width="0.8" height="4.80" fill="#f75444"/>
<rect x="1873.60" y="196.3" width="0.8" height="4.80" fill="#f75444"/>
<circle cx="1767" cy="244" r="6" fill="#18bc9c"/>
<path fill="#fff" d="M1849.90 238.50 L1852.50 241.10 L1845.00 248.60 L1842.00 249.00 L1842.40 246.00Z"/>
<rect x="1867.5" y="240.3" width="10" height="1.6" fill="#fff"/>
<path d="M1870.80 240.5 L1870.80 239.1 L1874.20 239.1 L1874.20 240.5" stroke="#fff" stroke-width="1.1" fill="none"/>
<path fill="#fff" d="M1868.50 241.9 L1876.50 241.9 L1876.00 248.89999999999998 Q1875.90 249.7 1874.70 249.7 L1870.30 249.7 Q1869.10 249.7 1869.00 248.89999999999998Z"/>
<rect x="1870.60" y="243.3" width="0.8" height="4.80" fill="#f75444"/>
<rect x="1872.10" y="243.3" width="0.8" height="4.80" fill="#f75444"/>
<rect x="1873.60" y="243.3" width="0.8" height="4.80" fill="#f75444"/>
<circle cx="1767" cy="291" r="6" fill="#18bc9c"/>
<path fill="#fff" d="M1849.90 285.50 L1852.50 288.10 L1845.00 295.60 L1842.00 296.00 L1842.40 293.00Z"/>
<rect x="1867.5" y="287.3" width="10" height="1.6" fill="#fff"/>
<path d="M1870.80 287.5 L1870.80 286.1 L1874.20 286.1 L1874.20 287.5" stroke="#fff" stroke-width="1.1" fill="none"/>
<path fill="#fff" d="M1868.50 288.9 L1876.50 288.9 L1876.00 295.9 Q1875.90 296.7 1874.70 296.7 L1870.30 296.7 Q1869.10 296.7 1869.00 295.9Z"/>
<rect x="1870.60" y="290.3" width="0.8" height="4.80" fill="#f75444"/>
<rect x="1872.10" y="290.3" width="0.8" height="4.80" fill="#f75444"/>
<rect x="1873.60" y="290.3" width="0.8" height="4.80" fill="#f75444"/>
<circle cx="1767" cy="338" r="6" fill="#18bc9c"/>
<path fill="#fff" d="M1849.90 332.50 L1852.50 335.10 L1845.00 342.60 L1842.00 343.00 L1842.40 340.00Z"/>
<rect x="1867.5" y="334.3" width="10" height="1.6" fill="#fff"/>
<path d="M1870.80 334.5 L1870.80 333.1 L1874.20 333.1 L1874.20 334.5" stroke="#fff" stroke-width="1.1" fill="none"/>
<path fill="#fff" d="M1868.50 335.9 L1876.50 335.9 L1876.00 342.9 Q1875.90 343.7 1874.70 343.7 L1870.30 343.7 Q1869.10 343.7 1869.00 342.9Z"/>
<rect x="1870.60" y="337.3" width="0.8" height="4.80" fill="#f75444"/>
<rect x="1872.10" y="337.3" width="0.8" height="4.80" fill="#f75444"/>
<rect x="1873.60" y="337.3" width="0.8" height="4.80" fill="#f75444"/>
<circle cx="1767" cy="385" r="6" fill="#18bc9c"/>
<path fill="#fff" d="M1849.90 379.50 L1852.50 382.10 L1845.00 389.60 L1842.00 390.00 L1842.40 387.00Z"/>
<rect x="1867.5" y="381.3" width="10" height="1.6" fill="#fff"/>
<path d="M1870.80 381.5 L1870.80 380.1 L1874.20 380.1 L1874.20 381.5" stroke="#fff" stroke-width="1.1" fill="none"/>
<path fill="#fff" d="M1868.50 382.9 L1876.50 382.9 L1876.00 389.9 Q1875.90 390.7 1874.70 390.7 L1870.30 390.7 Q1869.10 390.7 1869.00 389.9Z"/>
<rect x="1870.60" y="384.3" width="0.8" height="4.80" fill="#f75444"/>
<rect x="1872.10" y="384.3" width="0.8" height="4.80" fill="#f75444"/>
<rect x="1873.60" y="384.3" width="0.8" height="4.80" fill="#f75444"/>
<circle cx="1767" cy="432" r="6" fill="#18bc9c"/>
<path fill="#fff" d="M1849.90 426.50 L1852.50 429.10 L1845.00 436.60 L1842.00 437.00 L1842.40 434.00Z"/>
<rect x="1867.5" y="428.3" width="10" height="1.6" fill="#fff"/>
<path d="M1870.80 428.5 L1870.80 427.1 L1874.20 427.1 L1874.20 428.5" stroke="#fff" stroke-width="1.1" fill="none"/>
<path fill="#fff" d="M1868.50 429.9 L1876.50 429.9 L1876.00 436.9 Q1875.90 437.7 1874.70 437.7 L1870.30 437.7 Q1869.10 437.7 1869.00 436.9Z"/>
<rect x="1870.60" y="431.3" width="0.8" height="4.80" fill="#f75444"/>
<rect x="1872.10" y="431.3" width="0.8" height="4.80" fill="#f75444"/>
<rect x="1873.60" y="431.3" width="0.8" height="4.80" fill="#f75444"/>
<circle cx="1767" cy="479" r="6" fill="#18bc9c"/>
<path fill="#fff" d="M1849.90 473.50 L1852.50 476.10 L1845.00 483.60 L1842.00 484.00 L1842.40 481.00Z"/>
<rect x="1867.5" y="475.3" width="10" height="1.6" fill="#fff"/>
<path d="M1870.80 475.5 L1870.80 474.1 L1874.20 474.1 L1874.20 475.5" stroke="#fff" stroke-width="1.1" fill="none"/>
<path fill="#fff" d="M1868.50 476.9 L1876.50 476.9 L1876.00 483.9 Q1875.90 484.7 1874.70 484.7 L1870.30 484.7 Q1869.10 484.7 1869.00 483.9Z"/>
<rect x="1870.60" y="478.3" width="0.8" height="4.80" fill="#f75444"/>
<rect x="1872.10" y="478.3" width="0.8" height="4.80" fill="#f75444"/>
<rect x="1873.60" y="478.3" width="0.8" height="4.80" fill="#f75444"/>
<circle cx="1767" cy="526" r="6" fill="#18bc9c"/>
<path fill="#fff" d="M1849.90 520.50 L1852.50 523.10 L1845.00 530.60 L1842.00 531.00 L1842.40 528.00Z"/>
<rect x="1867.5" y="522.3" width="10" height="1.6" fill="#fff"/>
<path d="M1870.80 522.5 L1870.80 521.1 L1874.20 521.1 L1874.20 522.5" stroke="#fff" stroke-width="1.1" fill="none"/>
<path fill="#fff" d="M1868.50 523.9 L1876.50 523.9 L1876.00 530.9000000000001 Q1875.90 531.7 1874.70 531.7 L1870.30 531.7 Q1869.10 531.7 1869.00 530.9000000000001Z"/>
<rect x="1870.60" y="525.3" width="0.8" height="4.80" fill="#f75444"/>
<rect x="1872.10" y="525.3" width="0.8" height="4.80" fill="#f75444"/>
<rect x="1873.60" y="525.3" width="0.8" height="4.80" fill="#f75444"/>
<circle cx="1767" cy="573" r="6" fill="#18bc9c"/>
<path fill="#fff" d="M1849.90 567.50 L1852.50 570.10 L1845.00 577.60 L1842.00 578.00 L1842.40 575.00Z"/>
<rect x="1867.5" y="569.3" width="10" height="1.6" fill="#fff"/>
<path d="M1870.80 569.5 L1870.80 568.1 L1874.20 568.1 L1874.20 569.5" stroke="#fff" stroke-width="1.1" fill="none"/>
<path fill="#fff" d="M1868.50 570.9 L1876.50 570.9 L1876.00 577.9000000000001 Q1875.90 578.7 1874.70 578.7 L1870.30 578.7 Q1869.10 578.7 1869.00 577.9000000000001Z"/>
<rect x="1870.60" y="572.3" width="0.8" height="4.80" fill="#f75444"/>
<rect x="1872.10" y="572.3" width="0.8" height="4.80" fill="#f75444"/>
<rect x="1873.60" y="572.3" width="0.8" height="4.80" fill="#f75444"/>
<circle cx="1767" cy="620" r="6" fill="#18bc9c"/>
<path fill="#fff" d="M1849.90 614.50 L1852.50 617.10 L1845.00 624.60 L1842.00 625.00 L1842.40 622.00Z"/>
<rect x="1867.5" y="616.3" width="10" height="1.6" fill="#fff"/>
<path d="M1870.80 616.5 L1870.80 615.1 L1874.20 615.1 L1874.20 616.5" stroke="#fff" stroke-width="1.1" fill="none"/>
<path fill="#fff" d="M1868.50 617.9 L1876.50 617.9 L1876.00 624.9000000000001 Q1875.90 625.7 1874.70 625.7 L1870.30 625.7 Q1869.10 625.7 1869.00 624.9000000000001Z"/>
<rect x="1870.60" y="619.3" width="0.8" height="4.80" fill="#f75444"/>
<rect x="1872.10" y="619.3" width="0.8" height="4.80" fill="#f75444"/>
<rect x="1873.60" y="619.3" width="0.8" height="4.80" fill="#f75444"/>
<path fill="#555" d="M270.5 648.5 L266 652.5 L270.5 656.5Z"/>
<path fill="#555" d="M1880 648.5 L1884.5 652.5 L1880 656.5Z"/>
<path fill="#333" d="M614.25 692 L621.75 692 L618.0 688Z"/>
</svg>
<div class="a wm" style="left:222px;top:144px">玖福源码</div>
<div class="a wm" style="left:862px;top:144px">玖福源码</div>
<div class="a wm" style="left:1502px;top:144px">玖福源码</div>
<div class="a wm" style="left:222px;top:465px">玖福源码</div>
<div class="a wm" style="left:862px;top:465px">玖福源码</div>
<div class="a wm" style="left:1502px;top:465px">玖福源码</div>
<div class="a wm" style="left:222px;top:788px">玖福源码</div>
<div class="a wm" style="left:862px;top:788px">玖福源码</div>
<div class="a wm" style="left:1502px;top:788px">玖福源码</div>
</body></html>
